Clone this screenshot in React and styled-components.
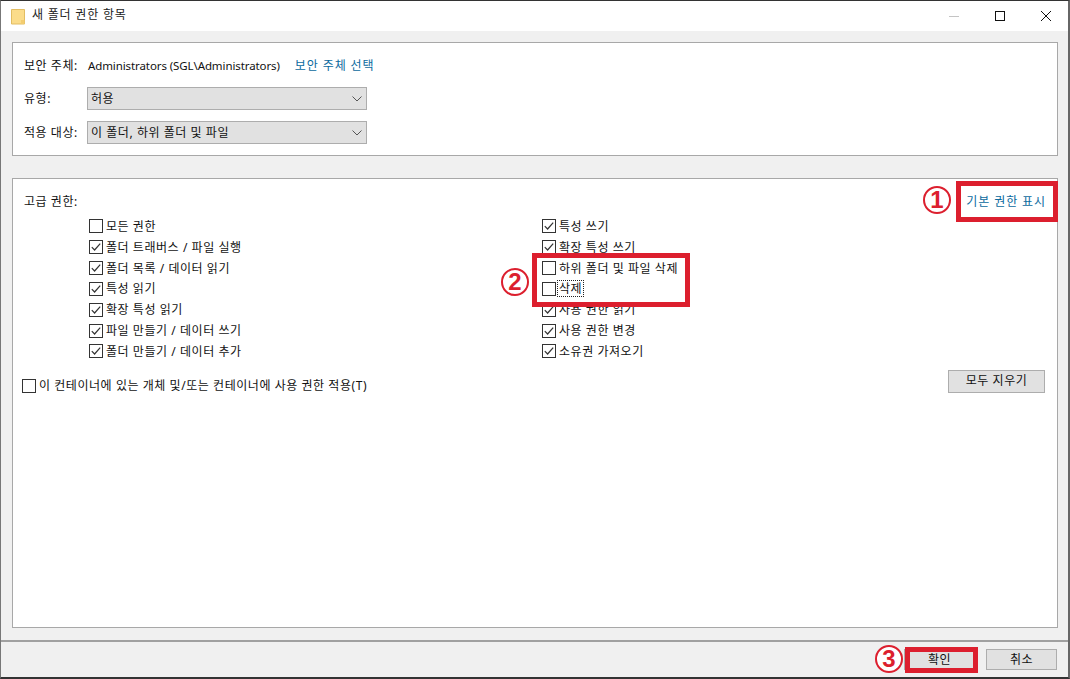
import React from "react";
import styled, { createGlobalStyle } from "styled-components";

const Global = createGlobalStyle`
  html, body { margin: 0; padding: 0; background: #fff; }
  * { box-sizing: border-box; }
`;

const Win = styled.div`
  position: relative;
  width: 1070px;
  height: 679px;
  display: flex;
  flex-direction: column;
  overflow: hidden;
  background: #f0f0f0;
  border-top: 1px solid #333;
  border-left: 1px solid #777;
  border-right: 2px solid #666;
  border-bottom: 2px solid #333;
  font: 12px/16px "Noto Sans", "Noto Sans CJK KR", sans-serif;
  letter-spacing: 0.55px;
  color: #111;
`;

const TitleBar = styled.div`
  height: 30px;
  flex: none;
  background: #fff;
  display: flex;
  align-items: center;
  padding-left: 10px;
`;

const Title = styled.span`
  margin-left: 7px;
  flex: 1;
  color: #222;
  letter-spacing: 0.8px;
  position: relative;
  top: -1px;
`;

const Controls = styled.div`
  display: flex;
  align-items: center;
  padding-right: 16px;
  gap: 34px;
`;

const Content = styled.div`
  flex: 1;
  display: flex;
  flex-direction: column;
  padding: 11px 10px 12px 11px;
  gap: 22px;
  min-height: 0;
`;

const Card = styled.section`
  background: #fff;
  border: 1px solid #a8a8a8;
  width: 1046px;
`;

const TopCard = styled(Card)`
  height: 114px;
  padding: 14px 11px 0;
  display: flex;
  flex-direction: column;
`;

const FieldRow = styled.div`
  display: flex;
  align-items: center;
  height: ${(p) => p.$h}px;
  margin-bottom: ${(p) => p.$mb || 0}px;
`;

const Label = styled.span`
  width: 63px;
  flex: none;
  white-space: nowrap;
`;

const Value = styled.span`
  letter-spacing: -0.1px;
  font-size: 11.5px;
  margin-left: 1px;
`;

const Link = styled.span`
  color: #0b6a9e;
  letter-spacing: 0.9px;
  margin-left: ${(p) => p.$ml || 0}px;
`;

const Select = styled.div`
  width: 280px;
  height: 23px;
  background: #e1e1e1;
  border: 1px solid #adadad;
  display: flex;
  align-items: center;
  justify-content: space-between;
  padding: 0 4px 0 3px;
`;

const MainCard = styled(Card)`
  flex: 1;
  padding: 15px 12px 0 9px;
  display: flex;
  flex-direction: column;
`;

const HeadRow = styled.div`
  display: flex;
  justify-content: space-between;
  align-items: center;
  padding-left: 2px;
  margin-right: -1px;
  height: 16px;
  margin-bottom: 6px;
`;

const PermGrid = styled.div`
  display: grid;
  grid-template-columns: 453px 1fr;
  padding-left: 67px;
`;

const Column = styled.div`
  display: flex;
  flex-direction: column;
`;

const CheckRow = styled.div`
  display: flex;
  align-items: center;
  height: 20.85px;
  gap: 2px;
  white-space: nowrap;
`;

const CheckText = styled.span`
  outline: ${(p) => (p.$focus ? "1px dotted #222" : "none")};
  outline-offset: 0;
  padding: 0 1px;
  line-height: 15px;
`;

const BoxSvg = styled.svg`
  width: 14px;
  height: 14px;
  flex: none;
`;

const BottomRow = styled.div`
  display: flex;
  justify-content: space-between;
  align-items: flex-start;
  margin-top: 8px;
`;

const InheritRow = styled(CheckRow)`
  margin-top: 8px;
  height: 16px;
`;

const Button = styled.button`
  width: ${(p) => p.$w}px;
  height: ${(p) => p.$h || 22}px;
  background: #e1e1e1;
  border: 1px solid #adadad;
  padding: 0;
  font: inherit;
  letter-spacing: 0.55px;
  color: #111;
`;

const Footer = styled.footer`
  flex: none;
  height: 37px;
  border-top: 2px solid #a0a0a0;
  display: flex;
  justify-content: flex-end;
  align-items: center;
  gap: 11px;
  padding: 0 11px 0 0;
`;

const Mark = styled.div`
  position: absolute;
  left: ${(p) => p.$x}px;
  top: ${(p) => p.$y}px;
  width: ${(p) => p.$w}px;
  height: ${(p) => p.$h}px;
  border: 5px solid #dc1f2e;
  pointer-events: none;
`;

const Badge = styled.div`
  position: absolute;
  left: ${(p) => p.$x - 14}px;
  top: ${(p) => p.$y - 14}px;
  width: 28px;
  height: 28px;
  border-radius: 50%;
  border: 2.5px solid #dc1f2e;
  color: #dc1f2e;
  display: flex;
  align-items: center;
  justify-content: center;
  font: 700 24px/1 "Liberation Sans", sans-serif;
  letter-spacing: 0;
  background: #fff;
`;

const Check = ({ checked, children, focus }) => (
  <>
    <BoxSvg viewBox="0 0 14 14">
      <rect x="0.5" y="0.5" width="13" height="13" fill="#fff" stroke="#333" />
      {checked && <path d="M2.8 7.2 L5.6 10 L11.2 3.6" fill="none" stroke="#333" strokeWidth="1.2" />}
    </BoxSvg>
    <CheckText $focus={focus}>{children}</CheckText>
  </>
);

const Chevron = () => (
  <svg width="10" height="6" viewBox="0 0 10 6">
    <path d="M0.5 0.5 L5 5 L9.5 0.5" fill="none" stroke="#555" strokeWidth="1" />
  </svg>
);

const left = [
  ["모든 권한", false],
  ["폴더 트래버스 / 파일 실행", true],
  ["폴더 목록 / 데이터 읽기", true],
  ["특성 읽기", true],
  ["확장 특성 읽기", true],
  ["파일 만들기 / 데이터 쓰기", true],
  ["폴더 만들기 / 데이터 추가", true],
];
const right = [
  ["특성 쓰기", true],
  ["확장 특성 쓰기", true],
  ["하위 폴더 및 파일 삭제", false],
  ["삭제", false, true],
  ["사용 권한 읽기", true],
  ["사용 권한 변경", true],
  ["소유권 가져오기", true],
];

export default function App() {
  return (
    <Win>
      <Global />
      <TitleBar>
        <svg width="14" height="17" viewBox="0 0 14 17">
          <path d="M0.5 1.5 H8 L13.5 1.5 V16 H0.5 Z" fill="#fbdc8a" stroke="#e2bd62" />
          <path d="M10 12 H13.5 V16 H10 Z" fill="#f3cd70" />
        </svg>
        <Title>새 폴더 권한 항목</Title>
        <Controls>
          <svg width="12" height="12" viewBox="0 0 12 12"><path d="M1 6.5H11" stroke="#c4c4c4" /></svg>
          <svg width="12" height="12" viewBox="0 0 12 12"><rect x="1.5" y="1.5" width="9" height="9" fill="none" stroke="#111" /></svg>
          <svg width="12" height="12" viewBox="0 0 12 12"><path d="M1 1L11 11M11 1L1 11" stroke="#111" /></svg>
        </Controls>
      </TitleBar>
      <Content>
        <TopCard>
          <FieldRow $h={18} $mb={12}>
            <Label>보안 주체:</Label>
            <Value>Administrators (SGL\Administrators)</Value>
            <Link $ml={15}>보안 주체 선택</Link>
          </FieldRow>
          <FieldRow $h={23} $mb={11}>
            <Label>유형:</Label>
            <Select>허용<Chevron /></Select>
          </FieldRow>
          <FieldRow $h={23}>
            <Label>적용 대상:</Label>
            <Select>이 폴더, 하위 폴더 및 파일<Chevron /></Select>
          </FieldRow>
        </TopCard>
        <MainCard>
          <HeadRow>
            <span>고급 권한:</span>
            <Link>기본 권한 표시</Link>
          </HeadRow>
          <PermGrid>
            <Column>
              {left.map(([t, c]) => (
                <CheckRow key={t}><Check checked={c}>{t}</Check></CheckRow>
              ))}
            </Column>
            <Column>
              {right.map(([t, c, f]) => (
                <CheckRow key={t}><Check checked={c} focus={f}>{t}</Check></CheckRow>
              ))}
            </Column>
          </PermGrid>
          <BottomRow>
            <InheritRow>
              <Check>이 컨테이너에 있는 개체 및/또는 컨테이너에 사용 권한 적용(T)</Check>
            </InheritRow>
            <Button $w={97} $h={23}>모두 지우기</Button>
          </BottomRow>
        </MainCard>
      </Content>
      <Footer>
        <Button $w={71} $h={21}>확인</Button>
        <Button $w={71} $h={21}>취소</Button>
      </Footer>
      <Mark $x={955} $y={180} $w={102} $h={41} />
      <Mark $x={531} $y={252} $w={158} $h={54} />
      <Mark $x={904} $y={646} $w={73} $h={26} />
      <Badge $x={936} $y={199}>1</Badge>
      <Badge $x={514} $y={281}>2</Badge>
      <Badge $x={888} $y={658}>3</Badge>
    </Win>
  );
}
